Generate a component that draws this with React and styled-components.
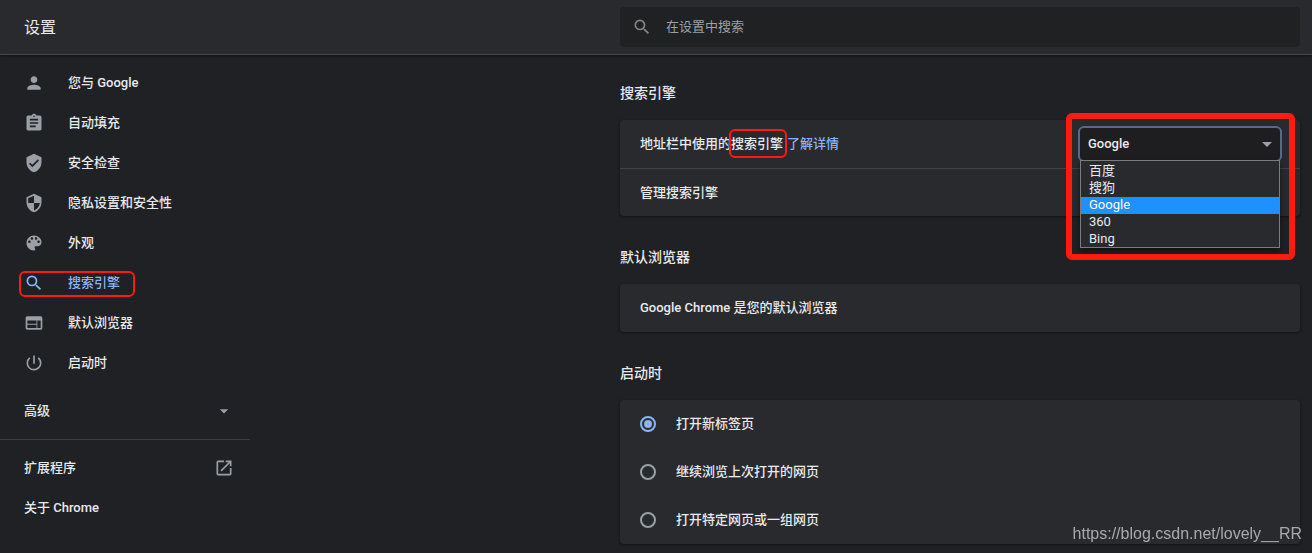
import React, { useState } from "react";
import styled, { createGlobalStyle, css } from "styled-components";
import {
  MdPerson,
  MdAssignment,
  MdVerifiedUser,
  MdSecurity,
  MdSearch,
  MdWeb,
  MdPowerSettingsNew,
  MdArrowDropDown,
  MdOpenInNew,
} from "react-icons/md";

const GlobalStyle = createGlobalStyle`
  * {
    box-sizing: border-box;
  }
  body {
    margin: 0;
    min-height: 100vh;
    background-color: #202124;
    color: #e8eaed;
    font-family: Roboto, "Noto Sans CJK SC", sans-serif;
    font-size: 13px;
    font-weight: 500;
    line-height: 20px;
  }
`;

const Header = styled.header`
  display: flex;
  justify-content: space-between;
  align-items: center;
  padding: 7px 12px 7px 24px;
  background-color: #292a2d;
  border-bottom: 1px solid #46474a;
  box-shadow: 0 1px 3px rgba(0, 0, 0, 0.5);
`;

const Title = styled.h1`
  margin: 0;
  padding-top: 2px;
  font-size: 16px;
  font-weight: 400;
`;

const SearchBox = styled.label`
  display: flex;
  align-items: center;
  gap: 14px;
  flex: 0 1 680px;
  height: 40px;
  padding: 0 12px;
  border-radius: 4px;
  background-color: #202123;
  color: #80868b;

  input {
    flex: 1;
    min-width: 0;
    padding: 0;
    border: 0;
    outline: 0;
    background: none;
    color: #e8eaed;
    font: inherit;
    font-weight: 400;
  }
  input::placeholder {
    color: #9aa0a6;
    opacity: 1;
  }
`;

const Body = styled.div`
  display: flex;
  justify-content: space-between;
  align-items: flex-start;
  padding-right: 12px;
`;

const Sidebar = styled.nav`
  flex: 0 0 250px;
  padding-top: 8px;
`;

const redFrame = css`
  content: "";
  position: absolute;
  border: 2px solid #ff1c0f;
  border-radius: 6px;
  pointer-events: none;
`;

const NavItem = styled.a`
  position: relative;
  display: flex;
  align-items: center;
  gap: 24px;
  height: 40px;
  padding: 0 16px 0 24px;
  color: ${(props) => (props.$active ? "#8ab4f8" : "#e8eaed")};
  text-decoration: none;

  svg {
    flex: none;
    color: ${(props) => (props.$active ? "#8ab4f8" : "#9aa0a6")};
  }
  ${(props) =>
    props.$active &&
    css`
      &::after {
        ${redFrame}
        inset: 8px 115px 6px 19px;
      }
    `}
`;

const SplitItem = styled(NavItem)`
  justify-content: space-between;
`;

const AdvancedButton = styled.button`
  display: flex;
  align-items: center;
  justify-content: space-between;
  width: 100%;
  height: 40px;
  margin-top: 8px;
  padding: 0 16px 0 24px;
  border: 0;
  background: none;
  color: inherit;
  font: inherit;

  svg {
    color: #9aa0a6;
  }
`;

const Divider = styled.hr`
  margin: 8px 0;
  border: 0;
  border-top: 1px solid #3c3d40;
`;

const Main = styled.main`
  display: flex;
  flex-direction: column;
  gap: 31px;
  flex: 0 1 680px;
  min-width: 0;
  padding: 28px 0 8px;
`;

const SectionTitle = styled.h2`
  margin: 0 0 17px;
  font-size: 14px;
  font-weight: 500;
`;

const Card = styled.div`
  border-radius: 4px;
  background-color: #292a2d;
  box-shadow: 0 1px 3px rgba(0, 0, 0, 0.5);
`;

const Row = styled.div`
  display: flex;
  align-items: center;
  justify-content: space-between;
  height: 48px;
  padding: 0 20px;

  & + & {
    border-top: 1px solid #414245;
  }
`;

const Marked = styled.span`
  position: relative;

  &::after {
    ${redFrame}
    inset: -7px -4px -7px -2px;
  }
`;

const Link = styled.a`
  margin-left: 4px;
  color: #8ab4f8;
  text-decoration: none;
`;

const Picker = styled.div`
  position: relative;
  display: flex;
  align-items: center;
  width: 200px;

  & > svg {
    position: absolute;
    right: 1px;
    color: #9aa0a6;
    pointer-events: none;
  }
  &::after {
    ${redFrame}
    inset: -15px -15px -100px -14px;
    border-width: 6px;
    z-index: 3;
  }
`;

const Select = styled.select`
  width: 100%;
  height: 32px;
  padding: 0 8px;
  appearance: none;
  border: 0;
  border-radius: 4px;
  outline: 0;
  background-color: #1e1e20;
  box-shadow: 0 0 0 2px #566a8f;
  color: #e8eaed;
  font: inherit;
`;

const Options = styled.ul`
  position: absolute;
  top: 100%;
  left: 0;
  right: 0;
  z-index: 2;
  margin: 0;
  padding: 2px 0 0;
  list-style: none;
  border: 1px solid #7c7c7e;
  background-color: #292a2d;
  box-shadow: 0 3px 6px rgba(0, 0, 0, 0.5);
`;

const Option = styled.li`
  height: 17px;
  padding-left: 8px;
  line-height: 15px;
  font-weight: 400;
  color: ${(props) => (props.$selected ? "#ffffff" : "#e8eaed")};
  background-color: ${(props) => (props.$selected ? "#1e90ff" : "transparent")};

  &:last-child {
    height: 16px;
  }
`;

const RadioRow = styled.label`
  display: flex;
  align-items: center;
  gap: 20px;
  height: 48px;
  padding: 0 20px;
`;

const Radio = styled.input`
  display: grid;
  place-items: center;
  width: 16px;
  height: 16px;
  margin: 0;
  appearance: none;
  border: 2px solid #9aa0a6;
  border-radius: 50%;

  &:checked {
    border-color: #8ab4f8;
  }
  &:checked::before {
    content: "";
    width: 8px;
    height: 8px;
    border-radius: 50%;
    background-color: #8ab4f8;
  }
`;

const Watermark = styled.div`
  position: fixed;
  right: 10px;
  bottom: 9px;
  color: #a9aaab;
  font-family: "Liberation Sans", Arial, sans-serif;
  font-size: 16px;
  font-weight: 400;
`;

const PaletteIcon = ({ size }) => (
  <svg width={size} height={size} viewBox="0 0 24 24" fill="currentColor">
    <path d="M12 3c-4.97 0-9 4.03-9 9s4.03 9 9 9c.83 0 1.5-.67 1.5-1.5 0-.39-.15-.74-.39-1.01-.23-.26-.38-.61-.38-.99 0-.83.67-1.5 1.5-1.5H16c2.76 0 5-2.24 5-5 0-4.42-4.03-8-9-8zm-5.5 9c-.83 0-1.5-.67-1.5-1.5S5.67 9 6.5 9 8 9.67 8 10.500 7.330 12 6.500 12zm3-4C8.670 8 8 7.330 8 6.500S8.670 5 9.500 5s1.500.67 1.500 1.500S10.330 8 9.500 8zm5 0c-.83 0-1.500-.67-1.500-1.500S13.670 5 14.500 5s1.500.67 1.500 1.500S15.330 8 14.500 8zm3 4c-.83 0-1.500-.67-1.500-1.500S16.670 9 17.500 9s1.500.67 1.500 1.500-.67 1.500-1.500 1.500z" />
  </svg>
);

const navItems = [
  { label: "您与 Google", icon: MdPerson },
  { label: "自动填充", icon: MdAssignment },
  { label: "安全检查", icon: MdVerifiedUser },
  { label: "隐私设置和安全性", icon: MdSecurity },
  { label: "外观", icon: PaletteIcon },
  { label: "搜索引擎", icon: MdSearch },
  { label: "默认浏览器", icon: MdWeb },
  { label: "启动时", icon: MdPowerSettingsNew },
];

const engines = ["百度", "搜狗", "Google", "360", "Bing"];

const startupOptions = [
  "打开新标签页",
  "继续浏览上次打开的网页",
  "打开特定网页或一组网页",
];

const EnginePicker = () => {
  const [engine, setEngine] = useState("Google");
  return (
    <Picker>
      <Select
        aria-labelledby="engine-label"
        value={engine}
        onChange={(e) => setEngine(e.target.value)}
      >
        {engines.map((name) => (
          <option key={name}>{name}</option>
        ))}
      </Select>
      <MdArrowDropDown size={24} />
      <Options role="listbox" aria-labelledby="engine-label">
        {engines.map((name) => (
          <Option
            key={name}
            role="option"
            aria-selected={name === engine}
            $selected={name === engine}
            onClick={() => setEngine(name)}
          >
            {name}
          </Option>
        ))}
      </Options>
    </Picker>
  );
};

const App = () => {
  const [active, setActive] = useState("搜索引擎");
  const [startup, setStartup] = useState(startupOptions[0]);

  return (
    <>
      <GlobalStyle />
      <Header>
        <Title>设置</Title>
        <SearchBox>
          <MdSearch size={20} />
          <input type="text" placeholder="在设置中搜索" aria-label="在设置中搜索" />
        </SearchBox>
      </Header>
      <Body>
        <Sidebar>
          {navItems.map(({ label, icon: Icon }) => (
            <NavItem
              key={label}
              href="#"
              $active={label === active}
              onClick={() => setActive(label)}
            >
              <Icon size={20} />
              {label}
            </NavItem>
          ))}
          <AdvancedButton type="button">
            高级
            <MdArrowDropDown size={20} />
          </AdvancedButton>
          <Divider />
          <SplitItem href="#">
            扩展程序
            <MdOpenInNew size={20} />
          </SplitItem>
          <NavItem href="#">关于 Chrome</NavItem>
        </Sidebar>
        <Main>
          <section>
            <SectionTitle>搜索引擎</SectionTitle>
            <Card>
              <Row>
                <div>
                  <span id="engine-label">
                    地址栏中使用的<Marked>搜索引擎</Marked>
                  </span>
                  <Link href="#">了解详情</Link>
                </div>
                <EnginePicker />
              </Row>
              <Row>管理搜索引擎</Row>
            </Card>
          </section>
          <section>
            <SectionTitle>默认浏览器</SectionTitle>
            <Card>
              <Row>Google Chrome 是您的默认浏览器</Row>
            </Card>
          </section>
          <section>
            <SectionTitle>启动时</SectionTitle>
            <Card>
              {startupOptions.map((option) => (
                <RadioRow key={option}>
                  <Radio
                    type="radio"
                    name="startup"
                    checked={option === startup}
                    onChange={() => setStartup(option)}
                  />
                  {option}
                </RadioRow>
              ))}
            </Card>
          </section>
        </Main>
      </Body>
      <Watermark>https://blog.csdn.net/lovely__RR</Watermark>
    </>
  );
};

export default App;
